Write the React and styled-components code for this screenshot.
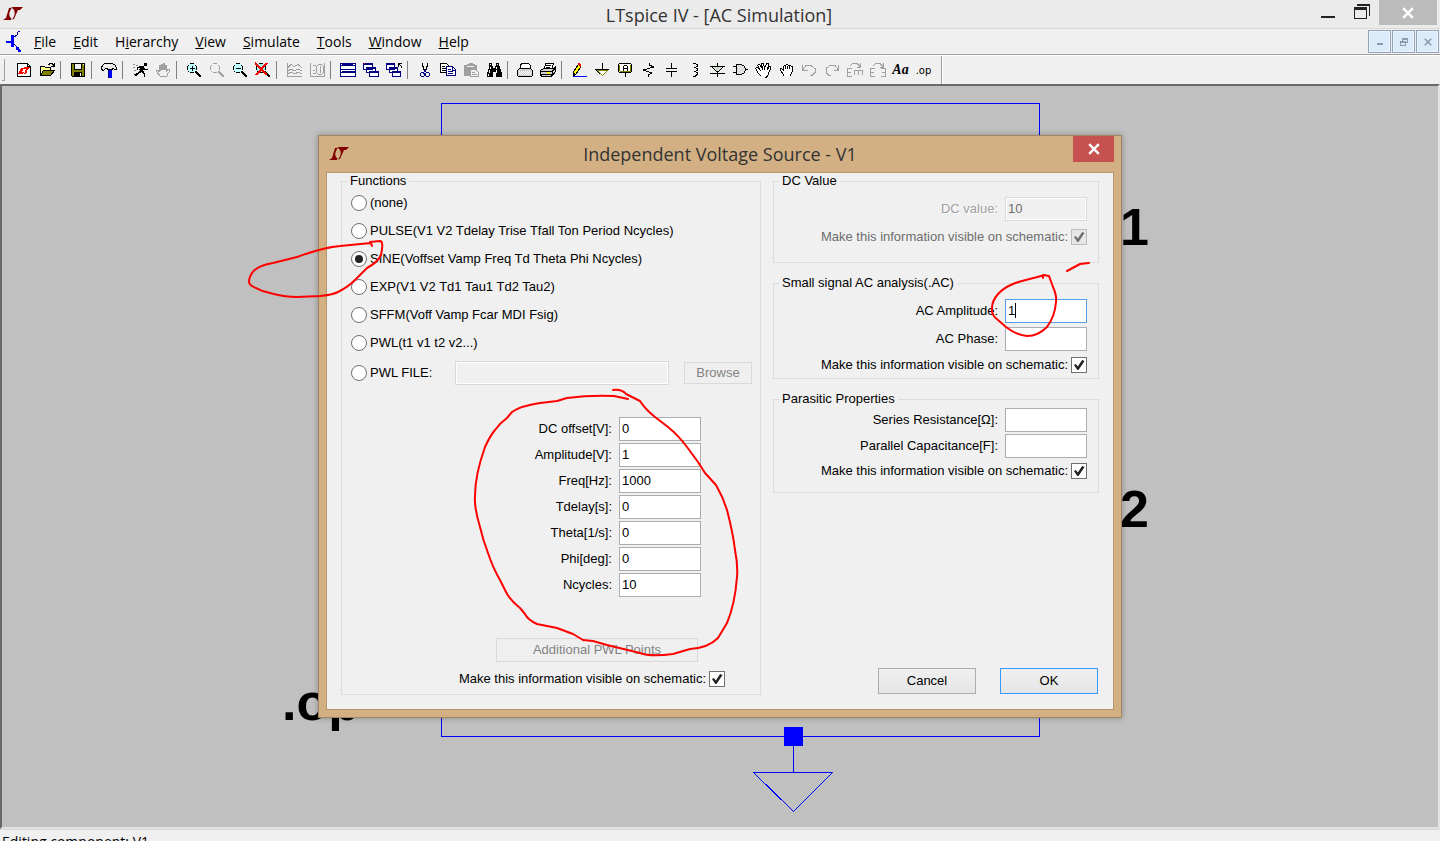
import React from 'react'
import styled, { createGlobalStyle } from 'styled-components'

const uiFont = '"Open Sans", "Noto Sans", sans-serif'
const formFont = '"Liberation Sans", Arial, sans-serif'

const menus = [
    ['', 'F', 'ile'],
    ['', 'E', 'dit'],
    ['H', 'i', 'erarchy'],
    ['', 'V', 'iew'],
    ['', 'S', 'imulate'],
    ['', 'T', 'ools'],
    ['', 'W', 'indow'],
    ['', 'H', 'elp']
]

const lens = 'M4 1.5h4M2.5 2.5v1M9.5 2.5v1M1.5 4v4M10.5 4v4M2.5 8.5v1M9.5 8.5v1M4 10.5h4'

const icons = {
    newSchematic: (
        <>
            <path d='M1.5 1.5h10l3 3v10h-13z' fill='#fff' stroke='#000' />
            <path d='M11.5 1.5v3h3' fill='none' stroke='#000' />
            <path d='M2 12l3-6h3l-2 4h2l-1 2zM8 5h6l-1 2h-1l-2 5H8l2-5H7z' fill='#f00' />
        </>
    ),
    open: (
        <>
            <path d='M1.5 13.5v-9h4l1 1h5v3' fill='#ffff90' stroke='#000' />
            <path d='M1.5 13.5l3-5h11l-4 5z' fill='#808000' stroke='#000' />
            <path d='M9 2.5h1v-1h3v1h1v1h1M15.5 1v4M12 4.5h4' fill='none' stroke='#000' />
        </>
    ),
    save: (
        <>
            <path d='M1.5 1.5h13v13h-12l-1-1z' fill='#808000' stroke='#000' />
            <path d='M4.5 1.5h7v6h-7z' fill='#f0f0f0' stroke='#000' />
            <path d='M4 10h8v4H4z' fill='#000' />
            <path d='M10 11h1v3h-1zM13 2h1v1h-1z' fill='#fff' />
        </>
    ),
    hammer: (
        <>
            <path d='M7 7h4v9H7z' fill='#00f' />
            <path d='M7 8h1v8H7z' fill='#000080' />
            <path d='M.5 5.5l1-2 2-2h8l3 2 1 3v1h-2l-1-1h-1v1h-5v-1h-2l-2 2-2-1z' fill='#e8e8e8' stroke='#000' />
            <path d='M3 3h7v1H3z' fill='#fff' />
        </>
    ),
    run: (
        <>
            <path d='M12 1h3v3h-3zM7 4h5v2H7zM8 5h4v3h-1v2H8V8H7V7h1zM7 9h3v1H9v1H7v1H6v1H5v1H3v-1H2v-1h2v-1h2v-1h1zM10 9h2v2h1v4h-1v-3h-1v-1h-1zM5 5h2v1H6v2H5zM12 6h1v1h3v1h-4z' fill='#000' />
            <path d='M1 2h2v1H1zM4 3h2v1H4zM1 5h2v1H1zM2 8h2v1H2z' fill='#888' />
        </>
    ),
    halt: (
        <path
            d='M4.5 9.5v-6h1v5M6.5 8v-6h1v6M8.5 8V1.5h1V8M10.5 8V3.5h1v6l1-2h2v2l-2 2v2l-1 1h-6l-4-5v-1h2l1 2'
            fill='none'
            stroke='#a0a0a0'
        />
    ),
    zoomIn: (
        <>
            <path d='M3 2h6v1h1v6H9v1H3V9H2V3h1z' fill='#c0ffff' />
            <path d={lens + 'M3.5 6.5h5M6.5 4v5'} stroke='#000' fill='none' />
            <path d='M10 10l5 5' stroke='#000' strokeWidth='2' />
        </>
    ),
    zoomPan: (
        <>
            <path d={lens} stroke='#a0a0a0' fill='none' />
            <path d='M10 10l5 5' stroke='#a0a0a0' strokeWidth='2' />
        </>
    ),
    zoomOut: (
        <>
            <path d='M3 2h6v1h1v6H9v1H3V9H2V3h1z' fill='#c0ffff' />
            <path d={lens + 'M3.5 6.5h5'} stroke='#000' fill='none' />
            <path d='M10 10l5 5' stroke='#000' strokeWidth='2' />
        </>
    ),
    zoomFit: (
        <>
            <path d='M3 2h6v1h1v6H9v1H3V9H2V3h1z' fill='#a0f0f0' />
            <path d={lens} stroke='#000' fill='none' />
            <path d='M10 10l5 5' stroke='#000' strokeWidth='2' />
            <path d='M0 1l12 12M12 1L1 13' stroke='#f00' strokeWidth='2' />
        </>
    ),
    plotPanes: (
        <path
            d='M1.5 1v14M1 14.5h15M2 5.5l3-3 3 2 4-2 4 3M2 8.5l3-1 3 1 4-1 4 1M2 11.5l3-1 4 1 3-1 4 1'
            fill='none'
            stroke='#a0a0a0'
        />
    ),
    autorange: (
        <path
            d='M1.5 1v14M1 14.5h15M4 3.5h3M4 8.5h2M4 11.5h3M7.5 4.5l2-2h3l2 2v6l-2 2h-3l-2-2zM11.5 4v7M15.5 1v13'
            fill='none'
            stroke='#a0a0a0'
        />
    ),
    tile: (
        <>
            <path d='M.5 1.5h15v13H.5z' fill='#fff' stroke='#000080' />
            <path d='M0 1h16v3H0zM0 7h16v4H0z' fill='#000080' />
            <path d='M1 2h1v1H1zM13 2h2v1h-2zM1 8h14v1H1zM1 9h1v1H1z' fill='#fff' />
        </>
    ),
    cascade: (
        <>
            <path d='M.5 1.5h9v6h-9zM3.5 5.5h9v5h-9zM6.5 9.5h9v5h-9z' fill='#fff' stroke='#000080' />
            <path d='M0 1h10v2H0zM3 5h10v2H3zM6 9h10v2H6z' fill='#000080' />
            <path d='M1 1h1v1H1z' fill='#f00' />
        </>
    ),
    closeAll: (
        <>
            <path d='M.5 1.5h8v6h-8zM3.5 5.5h8v5h-8zM6.5 9.5h8v5h-8z' fill='#fff' stroke='#000080' />
            <path d='M0 1h9v2H0zM3 5h9v2H3zM6 9h9v2H6z' fill='#000080' />
            <path d='M12 1h4v1h-3v3h-1zM13 2h1v1h-1zM14 3h1v1h-1zM15 4h1v2h-1z' fill='#000' />
        </>
    ),
    cut: (
        <>
            <path d='M5 1h1v3h1v3h1v2H7V8H6V5H5zM11 1h-1v3H9v3H8v2h1V8h1V5h1z' fill='#000' />
            <path d='M7.5 8v2M8.5 8v2M4.5 10.5h2v1h1v2l-1 1h-2l-1-1v-2zM9.5 10.5h2l1 1v2l-1 1h-2l-1-1v-2z' fill='none' stroke='#000080' />
        </>
    ),
    copy: (
        <>
            <path d='M.5 1.5h6l2 2v7h-8z' fill='#fff' stroke='#000' />
            <path d='M2 4h3v1H2zM2 6h5v1H2zM2 8h4v1H2z' fill='#000' />
            <path d='M6.5 4.5h6l3 3v6h-9z' fill='#fff' stroke='#000080' />
            <path d='M8 7h3v1H8zM8 9h5v1H8zM8 11h5v1H8zM12 5h1v3h2v1h-3z' fill='#000080' />
        </>
    ),
    paste: (
        <>
            <path d='M1 3h3V2h2V1h4v1h2v1h2v11H1z' fill='#a0a0a0' />
            <path d='M4 4h7v1H4z' fill='#f0f0f0' />
            <path d='M7.5 7.5h5l3 3v4h-8z' fill='#f0f0f0' stroke='#a0a0a0' />
            <path d='M9 10h3v1H9zM9 12h5v1H9z' fill='#a0a0a0' />
        </>
    ),
    find: (
        <>
            <path d='M3 1h3v3h1v2h2V4h1V1h3v3h1v3h1v3h1v5h-6v-5H7v5H1v-5h1V7h1z' fill='#000' />
            <path d='M4 2h1v1H4zM11 2h1v1h-1zM4 5h1v2H4zM10 5h1v2h-1zM3 8h1v3H3zM10 8h1v3h-1zM2 12h1v2H2z' fill='#fff' />
        </>
    ),
    printSetup: (
        <>
            <path d='M3.5 6.5v-4l2-1h6l2 2v3' fill='#fff' stroke='#000' />
            <path d='M.5 8.5l2-2h11l2 2v5l-1 1h-13l-1-1z' fill='#d0d0d0' stroke='#000' />
            <path d='M2 9.5h12M2 11.5h12M3 10.5h12M3 12.5h12' stroke='#fff' strokeDasharray='1 1' />
        </>
    ),
    print: (
        <>
            <path d='M4.5 6.5l1-5h8l-2 6' fill='#fff' stroke='#000' />
            <path d='M.5 8.5l3-2h10l2-2v5l-3 4-2 1h-9l-1-2z' fill='#d0d0d0' stroke='#000' />
            <path d='M1 9.5h11l3-3M1 12.5h11M12.5 9v5M6 3.5h5M6 5.5h4' fill='none' stroke='#000' />
            <path d='M7 10h3v2H7z' fill='#ff0' />
        </>
    ),
    wire: (
        <>
            <path d='M2 14.5h14' stroke='#00f' />
            <path d='M2.5 12.5v-3l5-7h1l1 1v2l-5 7z' fill='#ff0' stroke='#000' />
            <path d='M7 1h2v1h1v3H9V4H8V3H7z' fill='#f00' />
            <path d='M2 11h2v1h1v1H4v1H2z' fill='#000' />
        </>
    ),
    ground: (
        <>
            <path d='M8.5 1v6' stroke='#000' />
            <path d='M1.5 7.5h13l-6 6z' fill='#fff' stroke='#000' />
            <path d='M3 8.5h11M4.5 9.5l4 4 4-4' fill='none' stroke='#808000' />
        </>
    ),
    label: (
        <>
            <path d='M2.5 1.5h11l1 1v7l-1 1h-11l-1-1v-7zM8.5 11v4' fill='#fff' stroke='#000' />
            <path d='M2.5 3v6M13.5 3v6M3 9.5h11' stroke='#808000' />
            <path d='M7 3h3v1H7zM6 4h1v5H6zM10 4h1v5h-1zM7 6h3v1H7z' fill='#000' />
        </>
    ),
    resistor: <path d='M9.5 1v2l4 2-10 3 8 3-3 2v2' fill='none' stroke='#000' />,
    capacitor: <path d='M8.5 1v5M8.5 10v5M3 6.5h11M3 9.5h11' stroke='#000' />,
    inductor: <path d='M7 1.5h2l2 1v2l-2 1h-1M9 5.5l2 1v2l-2 1h-1M9 9.5l2 1v2l-2 2h-2' fill='none' stroke='#000' />,
    diode: (
        <>
            <path d='M2.5 4.5h12l-6 6z' fill='#e0e8e0' stroke='#000' />
            <path d='M8.5 1v14M1 4.5h15M1 11.5h15' stroke='#000' />
            <path d='M5 5h7v1h-1v1h-1v1h-1v1H8V8H7V7H6V6H5z' fill='#d0d8d0' />
        </>
    ),
    gate: <path d='M4.5 2.5h5l3 2 1 3-1 3-3 2h-5zM1 4.5h3M1 10.5h3M14 7.5h2' fill='#e0e0e0' stroke='#000' />,
    move: (
        <path
            d='M6.5 14.5l-3-3-3-5 1-1h1l3 3-3-5 1-1h1l3 4-1-5h2l1 5 2-5h2v2l-1 4 2-3h1v2l-2 5-1 3-2 1M7.5 6v2M9.5 6v2'
            fill='#fff'
            stroke='#000'
        />
    ),
    drag: (
        <>
            <path
                d='M5.5 13.5v-1l-3-4v-2h1l2 2v-4l1-1h1l1-1h1l1 1h2l1 1h1v5l-2 3v1'
                fill='#fff'
                stroke='#000'
            />
            <path d='M7.5 4v3M9.5 4v3M11.5 4v3' stroke='#000' />
        </>
    ),
    undo: <path d='M1.5 3v5h5M2 7.5l3-4h5l4 3v4l-3 3h-2' fill='none' stroke='#a0a0a0' />,
    redo: <path d='M14.5 3v5h-5M14 7.5l-3-4h-5l-4 3v4l3 3h2' fill='none' stroke='#a0a0a0' />,
    rotate: (
        <path
            d='M0 6.5h5M.5 6v9M0 10.5h4M0 14.5h5M7 8.5h9M7.5 9v4M11.5 9v4M15.5 9v4M3 3.5l3-2h4l3 3M13.5 1v4h-4'
            fill='none'
            stroke='#a0a0a0'
        />
    ),
    mirror: (
        <path
            d='M0 6.5h5M.5 6v9M0 10.5h4M0 14.5h5M11 6.5h5M15.5 6v9M12 10.5h4M11 14.5h5M3 3.5l3-2h4l3 3M13.5 1v4h-4'
            fill='none'
            stroke='#a0a0a0'
        />
    )
}

const toolGroups = [
    ['newSchematic', 'open'],
    ['save'],
    ['hammer'],
    ['run', 'halt'],
    ['zoomIn', 'zoomPan', 'zoomOut', 'zoomFit'],
    ['plotPanes', 'autorange'],
    ['tile', 'cascade', 'closeAll'],
    ['cut', 'copy', 'paste', 'find'],
    ['printSetup', 'print'],
    [
        'wire', 'ground', 'label', 'resistor', 'capacitor', 'inductor', 'diode',
        'gate', 'move', 'drag', 'undo', 'redo', 'rotate', 'mirror'
    ]
]

const sources = [
    '(none)',
    'PULSE(V1 V2 Tdelay Trise Tfall Ton Period Ncycles)',
    'SINE(Voffset Vamp Freq Td Theta Phi Ncycles)',
    'EXP(V1 V2 Td1 Tau1 Td2 Tau2)',
    'SFFM(Voff Vamp Fcar MDI Fsig)',
    'PWL(t1 v1 t2 v2...)'
]

const sineParams = [
    ['DC offset[V]:', '0'],
    ['Amplitude[V]:', '1'],
    ['Freq[Hz]:', '1000'],
    ['Tdelay[s]:', '0'],
    ['Theta[1/s]:', '0'],
    ['Phi[deg]:', '0'],
    ['Ncycles:', '10']
]

const Logo = () => (
    <svg width='20' height='14' viewBox='0 0 20 14' aria-hidden='true'>
        <path d='M6 1l3-.5C6 5 5 9 8.500 11.500L8 13H0l3-2z' fill='#800000' />
        <path d='M9 0h11l-3 3h-2l-4 9-2 .5C12 9 13 4 9.500 1.500z' fill='#800000' />
    </svg>
)

const Transistor = () => (
    <svg width='17' height='22' viewBox='0 0 17 22' shapeRendering='crispEdges' aria-hidden='true'>
        <path d='M0 10h6v2H0zM5 4h3v12H5z' fill='#00f' />
        <path d='M8 6l3-2 1-3 2-1M8 13l4 4 3 4' fill='none' stroke='#0000a0' />
        <path d='M10 16h3v3h2v2h-3v-2h-2z' fill='#00f' />
    </svg>
)

const Cross = ({ size, color }) => (
    <svg width={size} height={size} viewBox='0 0 10 10' aria-hidden='true'>
        <path d='M1 1l8 8M9 1L1 9' stroke={color} strokeWidth='2' />
    </svg>
)

const ToolIcon = ({ name }) => (
    <svg width='16' height='16' viewBox='0 0 16 16' shapeRendering='crispEdges' aria-hidden='true'>
        {icons[name]}
    </svg>
)

const Field = ({ id, label, value, ...rest }) => (
    <>
        <FieldLabel htmlFor={id} dimmed={rest.disabled}>{label}</FieldLabel>
        <TextBox id={id} defaultValue={value} {...rest} />
    </>
)

const VisibleCheck = ({ id, disabled }) => (
    <>
        <CheckLabel htmlFor={id} dimmed={disabled}>
            Make this information visible on schematic:
        </CheckLabel>
        <CheckBox id={id} type='checkbox' defaultChecked disabled={disabled} />
    </>
)

const Schematic = () => (
    <Drawing viewBox='240 86 960 740'>
        <g fill='none' stroke='#00f' shapeRendering='crispEdges'>
            <path d='M441.5 103.5h598v633h-598z' />
            <path d='M793.5 736v36M753.5 772.5h79l-39 39z' />
        </g>
        <path d='M784 727h19v19h-19z' fill='#00f' />
        <DrawingText x='1149' y='245' textAnchor='end'>1</DrawingText>
        <DrawingText x='1149' y='527' textAnchor='end'>2</DrawingText>
        <DrawingText x='282' y='720'>.op</DrawingText>
    </Drawing>
)

const PenMarks = () => (
    <Drawing viewBox='240 86 960 740'>
        <g fill='none' stroke='#f00' strokeWidth='2' strokeLinecap='round' strokeLinejoin='round'>
            <path d='M372 246L371 243L340 246Q325 247 297 257L273 263Q256 266 252 273Q246 283 252 286Q260 291 270 293Q284 297 297 297L320 296Q332 295 338 292Q348 287 355 280L367 268Q378 262 381 255Q384 241 380 241L370 242' />
            <path d='M1043 278V275L1049 276L1053 287Q1057 296 1056 302Q1055 316 1047 327Q1038 336 1027 336Q1016 335 1006 327L998 320Q991 315 992 308Q992 301 998 294Q1006 285 1022 281L1045 275' />
            <path d='M1067 271L1080 264L1089 263' />
            <path d='M613 390Q622 389 626 394L640 401Q645 409 655 417L668 427Q678 435 687 447L698 462L705 473L716 485Q723 497 727 510Q733 533 735 550Q738 565 737 577Q735 604 727 623L718 638Q708 648 690 649L673 654Q650 657 640 653L607 645L593 641L583 640L573 634L557 628L537 624Q528 620 525 614L520 608Q510 600 506 592L500 580Q493 568 488 553Q483 540 480 527Q474 507 475 496Q475 475 485 447Q490 436 495 430Q500 423 507 418L512 412Q520 406 540 403L557 401L567 398Q590 395 614 396L628 399' />
        </g>
    </Drawing>
)

const SourceDialog = () => (
    <Dialog role='dialog' aria-labelledby='dialog-title'>
        <DialogBar>
            <Logo />
            <DialogTitle id='dialog-title'>Independent Voltage Source - V1</DialogTitle>
            <DialogClose aria-label='Close'>
                <Cross size='12' color='#fff' />
            </DialogClose>
        </DialogBar>
        <DialogBody>
            <Group>
                <Legend>Functions</Legend>
                {sources.map((name, i) => (
                    <RadioRow key={name}>
                        <Radio type='radio' name='source' defaultChecked={i === 2} />
                        {name}
                    </RadioRow>
                ))}
                <FileRow>
                    <FileRadio>
                        <Radio type='radio' name='source' />
                        PWL FILE:
                    </FileRadio>
                    <FileBox aria-label='PWL file' disabled />
                    <PushButton width='68px' height='22px' disabled>Browse</PushButton>
                </FileRow>
                <Params>
                    {sineParams.map(([label, value], i) => (
                        <FieldRow key={label} height='26px'>
                            <Field id={`param-${i}`} label={label} value={value} />
                        </FieldRow>
                    ))}
                </Params>
                <PointsRow>
                    <PushButton width='202px' height='24px' disabled>Additional PWL Points</PushButton>
                </PointsRow>
                <FunctionsCheck>
                    <VisibleCheck id='show-functions' />
                </FunctionsCheck>
            </Group>
            <Side>
                <Group padding='6px 11px 11px 5px'>
                    <Legend>DC Value</Legend>
                    <FieldRow height='28px'>
                        <Field id='dc-value' label='DC value:' value='10' disabled />
                    </FieldRow>
                    <FieldRow height='28px'>
                        <VisibleCheck id='show-dc' disabled />
                    </FieldRow>
                </Group>
                <Group padding='6px 11px 1px 5px'>
                    <Legend>Small signal AC analysis(.AC)</Legend>
                    <FieldRow height='28px'>
                        <FieldLabel htmlFor='ac-amplitude'>AC Amplitude:</FieldLabel>
                        <CaretBox>
                            <TextBox id='ac-amplitude' defaultValue='1' active />
                        </CaretBox>
                    </FieldRow>
                    <FieldRow height='28px'>
                        <Field id='ac-phase' label='AC Phase:' value='' />
                    </FieldRow>
                    <FieldRow height='24px'>
                        <VisibleCheck id='show-ac' />
                    </FieldRow>
                </Group>
                <Group padding='0 11px 9px 5px'>
                    <Legend>Parasitic Properties</Legend>
                    <FieldRow height='26px'>
                        <Field id='resistance' label='Series Resistance[Ω]:' value='' />
                    </FieldRow>
                    <FieldRow height='26px'>
                        <Field id='capacitance' label='Parallel Capacitance[F]:' value='' />
                    </FieldRow>
                    <FieldRow height='24px'>
                        <VisibleCheck id='show-parasitic' />
                    </FieldRow>
                </Group>
                <Actions>
                    <PushButton width='98px' height='26px'>Cancel</PushButton>
                    <PushButton width='98px' height='26px' primary>OK</PushButton>
                </Actions>
            </Side>
        </DialogBody>
    </Dialog>
)

export default () => (
    <Page>
        <GlobalStyle />
        <TitleBar>
            <Logo />
            <AppTitle>LTspice IV - [AC Simulation]</AppTitle>
            <WindowButton aria-label='Minimize'>
                <svg width='16' height='18' viewBox='0 0 16 18'><path d='M1 16h14v2H1z' fill='#222' /></svg>
            </WindowButton>
            <WindowButton aria-label='Restore'>
                <svg width='16' height='16' viewBox='0 0 16 16' shapeRendering='crispEdges'>
                    <path d='M3 0h13v12h-1V2H3z' fill='#222' />
                    <path d='M0 3h13v12H0zM1 6v8h11V6z' fill='#222' fillRule='evenodd' />
                </svg>
            </WindowButton>
            <WindowClose aria-label='Close'>
                <Cross size='12' color='#fff' />
            </WindowClose>
        </TitleBar>
        <MenuBar>
            <Transistor />
            <Menus>
                {menus.map(([before, key, after]) => (
                    <MenuButton key={key + after}>{before}<u>{key}</u>{after}</MenuButton>
                ))}
            </Menus>
            <ChildButton aria-label='Minimize schematic'>
                <svg width='8' height='8'><path d='M1 5h6v2H1z' fill='#8c9bb0' /></svg>
            </ChildButton>
            <ChildButton aria-label='Restore schematic'>
                <svg width='8' height='8' viewBox='0 0 8 8' fill='none' stroke='#8c9bb0' shapeRendering='crispEdges'>
                    <path d='M2.5 3V.5h5v4H6M.5 3.5h5v4h-5zM0 4.5h6M2 1.5h6' />
                </svg>
            </ChildButton>
            <ChildButton aria-label='Close schematic'>
                <Cross size='8' color='#8c9bb0' />
            </ChildButton>
        </MenuBar>
        <ToolBar>
            <Grip />
            {toolGroups.map((group, i) => (
                <ToolGroup key={group[0]} first={i === 0}>
                    {group.map(name => (
                        <ToolButton key={name} aria-label={name}>
                            <ToolIcon name={name} />
                        </ToolButton>
                    ))}
                </ToolGroup>
            ))}
            <TextTool>Aa</TextTool>
            <DirectiveTool>.op</DirectiveTool>
            <ToolEnd />
        </ToolBar>
        <Workspace>
            <Sheet>
                <Schematic />
                <SourceDialog />
                <PenMarks />
            </Sheet>
        </Workspace>
        <StatusBar>Editing component: V1</StatusBar>
    </Page>
)


const GlobalStyle = createGlobalStyle`
    * {
        box-sizing: border-box;
    }
    body {
        margin: 0;
        background: #f0f0f0;
    }
    button, input {
        font: inherit;
        color: inherit;
        margin: 0;
        padding: 0;
    }
    svg {
        display: block;
        flex: none;
    }
`

const Page = styled.div`
    display: flex;
    flex-direction: column;
    height: 100vh;
    overflow: hidden;
    font-family: ${uiFont};
    color: #000;
`

const TitleBar = styled.header`
    display: flex;
    align-items: flex-start;
    height: 29px;
    padding: 0 3px;
    background: #ebebeb;
    border-bottom: 1px solid #d8d8d8;
    > svg {
        margin-top: 7px;
    }
`

const AppTitle = styled.h1`
    flex: 1;
    margin: 0;
    padding-left: 104px;
    text-align: center;
    font-size: 18px;
    line-height: 30px;
    font-weight: 400;
    color: #333;
`

const WindowButton = styled.button`
    display: flex;
    align-items: flex-start;
    justify-content: center;
    width: 34px;
    height: 25px;
    padding-top: 4px;
    border: 0;
    background: none;
    &:first-of-type {
        padding-top: 0;
    }
`

const WindowClose = styled.button`
    display: flex;
    align-items: center;
    justify-content: center;
    width: 58px;
    height: 25px;
    border: 0;
    background: #bcbcbc;
`

const MenuBar = styled.nav`
    display: flex;
    align-items: center;
    gap: 1px;
    height: 26px;
    padding: 0 1px 0 6px;
    border-bottom: 1px solid #a0a0a0;
`

const Menus = styled.div`
    display: flex;
    flex: 1;
    gap: 17px;
    padding-left: 10px;
`

const MenuButton = styled.button`
    border: 0;
    background: none;
    font-size: 14px;
    line-height: 20px;
`

const ChildButton = styled.button`
    display: flex;
    align-items: center;
    justify-content: center;
    width: 23px;
    height: 23px;
    border: 1px solid #93a4b8;
    background: #dcebf9;
    box-shadow: inset 0 0 0 1px #eaf4fd;
`

const ToolBar = styled.div`
    display: flex;
    align-items: center;
    height: 29px;
    border-top: 1px solid #fff;
`

const Grip = styled.span`
    width: 3px;
    height: 22px;
    margin: 0 7px 0 2px;
    border: 1px solid #a0a0a0;
    border-width: 0 1px 1px 0;
`

const ToolGroup = styled.div`
    display: flex;
    align-items: center;
    &::before {
        content: '';
        display: ${props => (props.first ? 'none' : 'block')};
        width: 1px;
        height: 18px;
        margin: 0 5px 0 2px;
        background: #808080;
    }
`

const ToolButton = styled.button`
    display: flex;
    align-items: center;
    justify-content: center;
    width: 23px;
    height: 22px;
    border: 0;
    background: none;
`

const TextTool = styled(ToolButton)`
    font-family: 'Liberation Serif', serif;
    font-size: 14px;
    font-style: italic;
    font-weight: 700;
`

const DirectiveTool = styled(ToolButton)`
    font-family: 'DejaVu Sans', sans-serif;
    font-size: 10px;
`

const ToolEnd = styled.span`
    align-self: stretch;
    width: 2px;
    margin-left: 6px;
    border-left: 1px solid #a0a0a0;
    border-right: 1px solid #fff;
`

const Workspace = styled.main`
    display: flex;
    flex: 1;
    justify-content: center;
    min-height: 0;
    background: #c0c0c0;
    border: 2px solid;
    border-color: #696969 #e3e3e3 #e3e3e3 #696969;
`

/* free canvas: the drawing, the dialog and the pen marks share its origin */
const Sheet = styled.div`
    position: relative;
    width: 960px;
`

const Drawing = styled.svg`
    position: absolute;
    top: 0;
    left: 0;
    width: 960px;
    height: 740px;
    pointer-events: none;
`

const DrawingText = styled.text`
    font-family: 'Liberation Sans', Arial, sans-serif;
    font-size: 52px;
    font-weight: 700;
`

const Dialog = styled.section`
    position: absolute;
    top: 49px;
    left: 78px;
    width: 804px;
    padding: 0 7px 7px;
    background: #d2b083;
    border: 1px solid #a08560;
    box-shadow: 0 0 6px rgba(0, 0, 0, 0.3);
`

const DialogBar = styled.div`
    display: flex;
    align-items: flex-start;
    height: 36px;
    padding-left: 3px;
    > svg {
        margin-top: 11px;
    }
`

const DialogTitle = styled.h2`
    flex: 1;
    margin: 0;
    padding-left: 18px;
    text-align: center;
    font-size: 18px;
    line-height: 36px;
    font-weight: 400;
    color: #333;
`

const DialogClose = styled.button`
    display: flex;
    align-items: center;
    justify-content: center;
    width: 41px;
    height: 26px;
    border: 0;
    background: #c75050;
`

const DialogBody = styled.form`
    display: grid;
    grid-template-columns: 420px 1fr;
    gap: 12px;
    padding: 0 14px 14px;
    background: #f0f0f0;
    border: 1px solid #b8946a;
    font-family: ${formFont};
    font-size: 13px;
    line-height: 16px;
`

const Side = styled.div`
    display: flex;
    flex-direction: column;
    gap: 12px;
`

const Group = styled.fieldset`
    min-width: 0;
    margin: 0;
    padding: ${props => props.padding || '0 8px 7px 5px'};
    border: 1px solid #dcdcdc;
`

const Legend = styled.legend`
    padding: 0 3px;
`

const RadioRow = styled.label`
    display: flex;
    align-items: center;
    gap: 3px;
    height: 28px;
    padding-left: 4px;
`

const Radio = styled.input`
    appearance: none;
    display: grid;
    place-items: center;
    width: 16px;
    height: 16px;
    border: 1px solid #707070;
    border-radius: 50%;
    background: #fff;
    &:checked::before {
        content: '';
        width: 8px;
        height: 8px;
        border-radius: 50%;
        background: #222;
    }
`

const FileRow = styled.div`
    display: flex;
    align-items: center;
    height: 32px;
`

const FileRadio = styled(RadioRow)`
    flex: 1;
`

const TextBox = styled.input`
    width: 82px;
    height: 24px;
    padding: 0 2px 2px;
    border: 1px solid ${props => (props.active ? '#569de5' : '#abadb3')};
    background: #fff;
    outline: none;
    &:disabled {
        color: #6d6d6d;
        background: #f0f0f0;
        border-color: #d9d9d9;
        box-shadow: inset 0 0 0 1px #fff;
    }
`

const FileBox = styled(TextBox)`
    width: 214px;
    margin-right: 15px;
`

const CaretBox = styled.span`
    position: relative;
    display: flex;
    &::after {
        content: '';
        position: absolute;
        top: 4px;
        left: 10px;
        width: 1px;
        height: 15px;
        background: #000;
    }
`

const FieldRow = styled.div`
    display: flex;
    align-items: center;
    justify-content: flex-end;
    height: ${props => props.height};
`

const FieldLabel = styled.label`
    margin-right: 7px;
    color: ${props => (props.dimmed ? '#a0a0a0' : 'inherit')};
    text-shadow: ${props => (props.dimmed ? '1px 1px 0 #fff' : 'none')};
`

const CheckLabel = styled.label`
    margin-right: 3px;
    color: ${props => (props.dimmed ? '#6d6d6d' : 'inherit')};
`

const CheckBox = styled.input`
    appearance: none;
    display: grid;
    place-items: center;
    width: 16px;
    height: 16px;
    border: 1px solid #707070;
    background: #fff;
    color: #222;
    &:checked::before {
        content: '';
        width: 12px;
        height: 12px;
        background: currentColor;
        clip-path: polygon(8% 50%, 24% 42%, 40% 62%, 76% 8%, 96% 16%, 46% 92%, 36% 92%);
    }
    &:disabled {
        color: #707070;
        border-color: #bcbcbc;
        background: #e6e6e6;
    }
`

const Params = styled.div`
    margin-top: 27px;
    padding-right: 51px;
`

const PointsRow = styled.div`
    display: flex;
    justify-content: flex-end;
    margin-top: 40px;
    padding-right: 54px;
`

const FunctionsCheck = styled.div`
    display: flex;
    align-items: center;
    justify-content: flex-end;
    margin-top: 9px;
    padding-right: 27px;
`

const PushButton = styled.button.attrs({ type: 'button' })`
    width: ${props => props.width};
    height: ${props => props.height};
    border: 1px solid ${props => (props.primary ? '#3399ff' : '#acacac')};
    background: linear-gradient(#f0f0f0, #e5e5e5);
    &:disabled {
        color: #838383;
        background: #efefef;
        border-color: #d9d9d9;
    }
`

const Actions = styled.div`
    display: flex;
    justify-content: flex-end;
    gap: 24px;
    margin-top: auto;
    padding: 0 1px 1px 0;
`

const StatusBar = styled.footer`
    height: 12px;
    padding-left: 2px;
    border-top: 1px solid #d9d9d9;
    font-size: 14px;
    line-height: 24px;
    overflow: hidden;
`
